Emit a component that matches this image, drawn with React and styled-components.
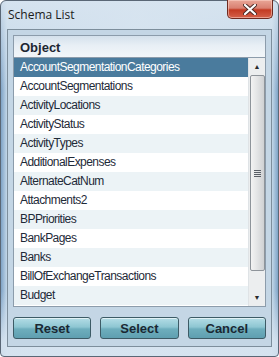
import React from "react";
import styled, { createGlobalStyle } from "styled-components";

const Global = createGlobalStyle`
  html, body { margin: 0; padding: 0; background: #ffffff; }
  * { box-sizing: border-box; }
`;

const Frame = styled.div`
  width: 279px;
  height: 357px;
  border: 1px solid #5a6776;
  border-radius: 6px 6px 4px 4px;
  background:
    linear-gradient(180deg, rgba(215, 228, 240, 0.9) 0px, rgba(215, 228, 240, 0) 90px, rgba(215, 228, 240, 0) 290px, rgba(215, 228, 240, 0.9) 340px),
    linear-gradient(90deg, #7fa3c6 0px, #c3d7e8 6px, #d4e2ee 50%, #c3d7e8 calc(100% - 6px), #7fa3c6 100%);
  display: flex;
  flex-direction: column;
  font-family: "Liberation Sans", Arial, sans-serif;
`;

const TitleBar = styled.div`
  height: 28px;
  display: flex;
  justify-content: space-between;
  align-items: flex-start;
  padding-left: 7px;
`;

const Title = styled.div`
  font-family: "Open Sans", "Noto Sans", sans-serif;
  font-size: 12px;
  color: #1b1b1b;
  margin-top: 5px;
`;

const CloseButton = styled.div`
  width: 46px;
  height: 19px;
  margin-right: 5px;
  margin-top: -1px;
  border: 1px solid #6e2a20;
  border-top: none;
  border-radius: 0 0 5px 5px;
  background: linear-gradient(180deg, #e9a697 0%, #d98071 45%, #c33a22 55%, #d4614a 100%);
  display: flex;
  align-items: center;
  justify-content: center;
  box-shadow: inset 0 0 0 1px rgba(255, 220, 210, 0.5);
`;

const Panel = styled.div`
  margin: 0 6px;
  border: 1px solid #7d8e9c;
  background: #c4d6e5;
  height: 318px;
  padding: 5px 5px 0 5px;
  display: flex;
  flex-direction: column;
`;

const Header = styled.div`
  height: 22px;
  border: 1px solid #8c9cab;
  border-bottom: none;
  background: linear-gradient(180deg, #d4e1ec 0%, #e8eff5 45%, #f2f6f9 100%);
  font-weight: bold;
  font-size: 13px;
  color: #1d2733;
  padding: 4px 0 0 6px;
`;

const ListBox = styled.div`
  height: 250px;
  border: 1px solid #8c9cab;
  background: #ffffff;
  display: flex;
`;

const Rows = styled.div`
  flex: 1;
  overflow: hidden;
`;

const Row = styled.div`
  height: 19px;
  padding-left: 6px;
  font-size: 12px;
  letter-spacing: -0.55px;
  line-height: 19px;
  white-space: nowrap;
  color: ${(p) => (p.$selected ? "#ffffff" : "#1e2a38")};
  background: ${(p) =>
    p.$selected ? "#4a7b9d" : p.$alt ? "#ecf3f6" : "#ffffff"};
`;

const ScrollBar = styled.div`
  width: 17px;
  background: #eceeef;
  border-left: 1px solid #dfe3e6;
  display: flex;
  flex-direction: column;
  align-items: center;
`;

const Arrow = styled.div`
  height: 17px;
  width: 17px;
  display: flex;
  align-items: center;
  justify-content: center;
  font-size: 7px;
  color: #2a2a2a;
`;

const Thumb = styled.div`
  width: 15px;
  height: 196px;
  border: 1px solid #8e949a;
  border-radius: 2px;
  background: linear-gradient(90deg, #f3f3f3 0%, #e4e5e6 45%, #cfd1d3 100%);
  display: flex;
  align-items: center;
  justify-content: center;
`;

const Grip = styled.div`
  width: 7px;
  height: 7px;
  background: repeating-linear-gradient(180deg, #5a5f66 0 1px, transparent 1px 2px);
`;

const Filler = styled.div`
  flex: 1;
`;

const ButtonRow = styled.div`
  display: flex;
  gap: 9px;
  margin-top: 10px;
`;

const Button = styled.div`
  flex: 1;
  height: 22px;
  border: 1px solid #3d5b66;
  border-radius: 3px;
  background: linear-gradient(180deg, #b4dde6 0%, #8ec6d2 45%, #6eaebd 55%, #5f9fb0 100%);
  box-shadow: inset 0 1px 0 rgba(255, 255, 255, 0.6);
  font-weight: bold;
  font-size: 13px;
  color: #1a2833;
  display: flex;
  align-items: center;
  justify-content: center;
`;

const items = [
  "AccountSegmentationCategories",
  "AccountSegmentations",
  "ActivityLocations",
  "ActivityStatus",
  "ActivityTypes",
  "AdditionalExpenses",
  "AlternateCatNum",
  "Attachments2",
  "BPPriorities",
  "BankPages",
  "Banks",
  "BillOfExchangeTransactions",
  "Budget",
];

export default function App() {
  return (
    <>
      <Global />
      <Frame>
        <TitleBar>
          <Title>Schema List</Title>
          <CloseButton>
            <svg width="14" height="11" viewBox="0 0 14 11">
              <path d="M2 1 L12 10 M12 1 L2 10" stroke="#4a2a26" strokeWidth="4" strokeLinecap="round" />
              <path d="M2 1 L12 10 M12 1 L2 10" stroke="#ffffff" strokeWidth="2.2" strokeLinecap="round" />
            </svg>
          </CloseButton>
        </TitleBar>
        <Panel>
          <Header>Object</Header>
          <ListBox>
            <Rows>
              {items.map((name, i) => (
                <Row key={name} $selected={i === 0} $alt={i % 2 === 0}>
                  {name}
                </Row>
              ))}
            </Rows>
            <ScrollBar>
              <Arrow>▲</Arrow>
              <Thumb>
                <Grip />
              </Thumb>
              <Filler />
              <Arrow>▼</Arrow>
            </ScrollBar>
          </ListBox>
          <ButtonRow>
            <Button>Reset</Button>
            <Button>Select</Button>
            <Button>Cancel</Button>
          </ButtonRow>
        </Panel>
      </Frame>
    </>
  );
}
